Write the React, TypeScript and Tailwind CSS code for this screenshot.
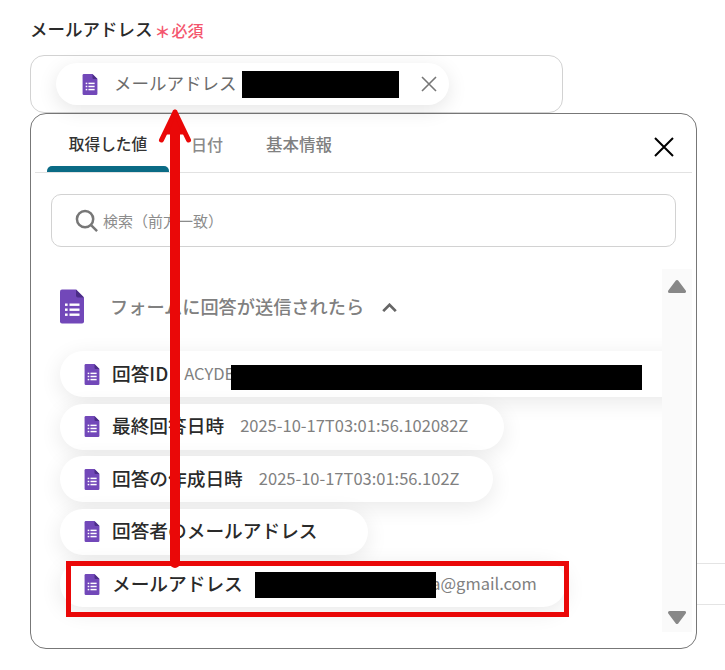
const jp = "font-['Noto_Sans_CJK_JP','Noto_Sans',sans-serif]";

function FormsIcon({ className }: { className: string }) {
  return (
    <svg viewBox="0 0 24 34" className={className}>
      <path d="M2 0H16L24 8V32a2 2 0 0 1-2 2H2a2 2 0 0 1-2-2V2a2 2 0 0 1 2-2z" fill="#7248b9" />
      <path d="M16 0L24 8H18a2 2 0 0 1-2-2z" fill="#4b2d87" />
      <g fill="#fff">
        <rect x="5" y="14" width="2.6" height="2.4" />
        <rect x="9.5" y="14" width="10" height="2.4" />
        <rect x="5" y="19" width="2.6" height="2.4" />
        <rect x="9.5" y="19" width="10" height="2.4" />
        <rect x="5" y="24" width="2.6" height="2.4" />
        <rect x="9.5" y="24" width="10" height="2.4" />
      </g>
    </svg>
  );
}

function ValueChip({ label, value, width }: { label: string; value?: string; width: string }) {
  return (
    <div className={`flex h-[46px] shrink-0 items-center rounded-full bg-white pb-[2px] pl-6 shadow-[0_5px_22px_rgba(0,0,0,0.09)] ${width}`}>
      <FormsIcon className="mt-[2px] h-[21px] w-[16px] shrink-0" />
      <span className="ml-[12px] whitespace-nowrap text-[18.7px] font-medium leading-none text-[#2a2a2a]">{label}</span>
      {value && <span className="ml-[16px] whitespace-nowrap text-[16.5px] leading-none text-[#808080]">{value}</span>}
    </div>
  );
}

export default function App() {
  return (
    <div className={`relative h-[670px] w-[725px] overflow-hidden bg-white ${jp}`}>
      <div className="absolute left-[697px] top-[563px] h-[42px] w-[28px] border-y border-[#e4e4e4]" />

      <div className="px-[30px] pt-[18px]">
        <div className="flex h-[24px] items-center">
          <span className="pb-[3px] text-[17.5px] font-medium leading-none text-[#2a2a2a]">メールアドレス</span>
          <span className="ml-[2px] mt-[2px] text-[16px] font-bold leading-none text-[#f4566e]">＊</span>
          <span className="ml-[1px] text-[16px] font-medium leading-none text-[#f4566e]">必須</span>
        </div>

        <div className="mt-[13px] flex h-[58px] w-[533px] items-center rounded-[14px] border border-[#d2d2d2] pl-[25px]">
          <div className="flex h-[42px] w-[393px] items-center rounded-full bg-white pl-[26px] shadow-[0_5px_20px_rgba(0,0,0,0.1)]">
            <FormsIcon className="h-[21px] w-[16px]" />
            <span className="mb-[2px] ml-[16px] text-[17.5px] leading-none text-[#6c6c6c]">メールアドレス</span>
            <svg viewBox="0 0 16 16" className="ml-[184px] h-4 w-4" fill="none" stroke="#777" strokeWidth="1.6">
              <path d="M1 1L15 15M15 1L1 15" />
            </svg>
          </div>
        </div>

        <div className="flex h-[536px] w-[667px] flex-col rounded-[16px] border border-[#777] bg-white">
          <div className="mx-[4px] flex h-[59px] shrink-0 items-stretch border-b border-[#e2e2e2] pl-[12px] pr-[16px]">
            <div className="flex w-[122px] flex-col items-center justify-end">
              <span className="mb-[14px] text-[15.7px] font-medium leading-none text-[#333]">取得した値</span>
              <div className="h-[6px] w-full rounded-t-[5px] bg-[#0a6b85]" />
            </div>
            <span className="mb-[20px] ml-[22px] self-end text-[16px] font-medium leading-none text-[#8a8a8a]">日付</span>
            <span className="mb-[20px] ml-[43px] self-end text-[16.5px] font-medium leading-none text-[#808080]">基本情報</span>
            <svg viewBox="0 0 20 20" className="ml-auto mr-[2px] mt-[23px] h-5 w-5" fill="none" stroke="#000" strokeWidth="2">
              <path d="M1 1L19 19M19 1L1 19" />
            </svg>
          </div>

          <div className="ml-[20px] mt-[21px] flex h-[53px] w-[625px] shrink-0 items-center rounded-[10px] border border-[#d2d2d2] pl-[23px]">
            <svg viewBox="0 0 24 24" className="h-[23px] w-[23px]" fill="none" stroke="#777" strokeWidth="2.6">
              <circle cx="10.5" cy="10.5" r="8.5" />
              <path d="M17 17L23 23" />
            </svg>
            <span className="ml-[5px] text-[15px] leading-none text-[#8c8c8c]">検索（前方一致）</span>
          </div>

          <div className="mt-[22px] flex min-h-0 flex-1">
            <div className="w-[631px] shrink-0 overflow-hidden pl-[29px]">
              <div className="-mt-[1px] flex h-[83px] items-start pt-[21px]">
                <FormsIcon className="h-[35px] w-[24px]" />
                <span className="ml-[26px] mt-[8px] whitespace-nowrap text-[18.2px] font-medium leading-none text-[#808080]">フォームに回答が送信されたら</span>
                <svg viewBox="0 0 16 10" className="ml-[18px] mt-[14px] h-[9px] w-[15px]" fill="none" stroke="#666" strokeWidth="3">
                  <path d="M1 9L8 2L15 9" />
                </svg>
              </div>
              <div className="flex flex-col gap-[6.5px]">
                <ValueChip label="回答ID" value="ACYDBNi" width="w-[640px]" />
                <ValueChip label="最終回答日時" value="2025-10-17T03:01:56.102082Z" width="w-[444px]" />
                <ValueChip label="回答の作成日時" value="2025-10-17T03:01:56.102Z" width="w-[433px]" />
                <ValueChip label="回答者のメールアドレス" width="w-[308px]" />
                <ValueChip label="メールアドレス" value="xxxxxxxxxxxxxxxxxxxxxa@gmail.com" width="w-[506px]" />
              </div>
            </div>
            <div className="relative h-[363px] w-[30px] shrink-0 bg-[#fafafa]">
              <svg viewBox="0 0 18 14" className="absolute left-[6px] top-[10px] h-[14px] w-[18px]" fill="#888" stroke="#888" strokeWidth="3" strokeLinejoin="round">
                <path d="M9 2.5L16.5 12.5H1.5z" />
              </svg>
              <svg viewBox="0 0 18 14" className="absolute bottom-[7px] left-[6px] h-[14px] w-[18px]" fill="#888" stroke="#888" strokeWidth="3" strokeLinejoin="round">
                <path d="M9 11.5L16.5 1.5H1.5z" />
              </svg>
            </div>
          </div>
        </div>
      </div>

      {/* redactions and annotation overlays */}
      <div className="absolute left-[242px] top-[71px] h-[27px] w-[157px] bg-black" />
      <div className="absolute left-[231px] top-[365px] h-[25px] w-[411px] bg-black" />
      <div className="absolute left-[255px] top-[572px] h-[26px] w-[181px] bg-black" />
      <div className="absolute left-[66px] top-[561px] h-[56px] w-[503px] border-[5px] border-[#ea0808]" />
      <svg className="absolute left-[155px] top-[105px] h-[470px] w-[40px]" viewBox="0 0 40 470" fill="none" stroke="#ea0808" strokeLinecap="round" strokeLinejoin="round">
        <path d="M20 20V458" strokeWidth="10" />
        <path d="M20 7L6.5 35M20 7L33.5 35" strokeWidth="5" />
        <path d="M20 7L12 28H28z" fill="#ea0808" strokeWidth="3" />
      </svg>
    </div>
  );
}
